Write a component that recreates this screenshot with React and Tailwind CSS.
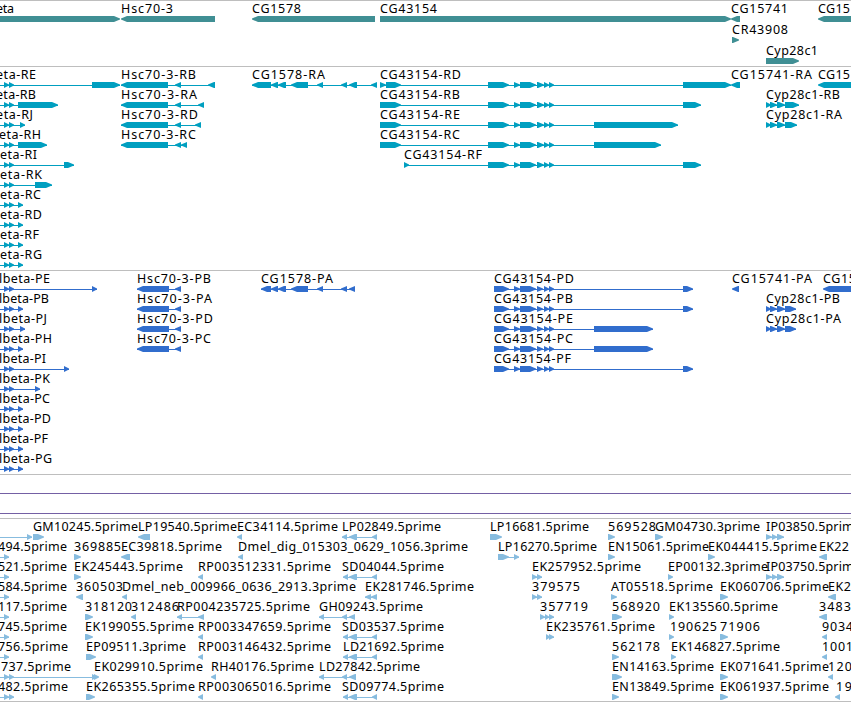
import React from 'react';

// Feature tuple: [label, labelStart, labelEnd, exons, strand]
const betaStart = [[-6, -1], [4, 9], [9, 14]];
const cgMid = [[488, 509], [514, 520], [520, 536], [537, 544], [544, 549], [549, 554]];
const cgMidCds = [[494, 509], [514, 520], [520, 536], [537, 543], [544, 549], [549, 554]];
const cypStart = [[766, 771], [770, 777], [777, 785]];
const sdExons = [[343, 348], [349, 357], [372, 377]];
const ipExons = [[766, 772], [772, 777], [777, 784]];
const estStart = [[-6, -1], [4, 9]];

const genes = [
  [
    ['eta', -4, 14, [[-10, 120]], 1],
    ['Hsc70-3', 121, 173, [[121, 215]], -1],
    ['CG1578', 252, 301, [[252, 375]], -1],
    ['CG43154', 380, 437, [[380, 731]], 1],
    ['CG15741', 731, 788, [[731, 740]], -1],
    ['CG15', 818, 850, [[818, 900]], -1],
  ],
  [['CR43908', 732, 788, [[732, 739]], 1]],
  [['Cyp28c1', 766, 818, [[766, 799]], 1]],
];

const transcripts = [
  [
    ['eta-RE', -4, 36, [...betaStart, [92, 120]], 1],
    ['Hsc70-3-RB', 121, 196, [[121, 168], [175, 181], [208, 215]], -1],
    ['CG1578-RA', 252, 325, [[252, 271], [271, 278], [278, 286], [291, 308], [317, 323], [341, 347], [349, 357], [371, 377]], -1],
    ['CG43154-RD', 380, 461, [[380, 386], [386, 401], ...cgMid, [683, 731]], 1],
    ['CG15741-RA', 731, 812, [[731, 740]], -1],
    ['CG15', 818, 850, [[818, 900]], -1],
  ],
  [
    ['eta-RB', -4, 36, [...betaStart, [18, 58]], 1],
    ['Hsc70-3-RA', 121, 197, [[121, 168], [175, 181], [198, 204]], -1],
    ['CG43154-RB', 380, 460, [[380, 401], ...cgMid, [683, 701]], 1],
    ['Cyp28c1-RB', 766, 840, [...cypStart, [785, 799]], 1],
  ],
  [
    ['eta-RJ', -4, 33, [...betaStart, [20, 25]], 1],
    ['Hsc70-3-RD', 121, 198, [[121, 168], [175, 181], [195, 201]], -1],
    ['CG43154-RE', 380, 460, [[380, 401], ...cgMid, [594, 678]], 1],
    ['Cyp28c1-RA', 766, 842, [...cypStart, [785, 797]], 1],
  ],
  [
    ['eta-RH', -1, 41, [...betaStart, [18, 47]], 1],
    ['Hsc70-3-RC', 121, 196, [[121, 168], [175, 181], [181, 187]], -1],
    ['CG43154-RC', 380, 460, [[380, 401], ...cgMid, [594, 661]], 1],
  ],
  [
    ['eta-RI', 0, 37, [...betaStart, [64, 74]], 1],
    ['CG43154-RF', 404, 482, [[404, 409], ...cgMid, [683, 701]], 1],
  ],
  [['eta-RK', 0, 42, [...betaStart, [35, 52]], 1]],
  [['eta-RC', 0, 41, [...betaStart, [18, 23]], 1]],
  [['eta-RD', 0, 42, [...betaStart, [18, 23]], 1]],
  [['eta-RF', 0, 39, [...betaStart, [18, 23]], 1]],
  [['eta-RG', 0, 42, [...betaStart, [18, 23]], 1]],
];

const proteins = [
  [
    ['lbeta-PE', -1, 50, [...betaStart, [92, 97]], 1],
    ['Hsc70-3-PB', 137, 211, [[137, 169], [175, 181]], -1],
    ['CG1578-PA', 261, 333, [[261, 271], [271, 278], [278, 286], [291, 308], [317, 323], [341, 347], [349, 355]], -1],
    ['CG43154-PD', 494, 574, [...cgMidCds, [683, 693]], 1],
    ['CG15741-PA', 732, 812, [[732, 739]], -1],
    ['CG15', 823, 856, [[823, 900]], -1],
  ],
  [
    ['lbeta-PB', -1, 49, [...betaStart, [18, 23]], 1],
    ['Hsc70-3-PA', 137, 212, [[137, 169], [175, 181]], -1],
    ['CG43154-PB', 494, 573, [...cgMidCds, [683, 693]], 1],
    ['Cyp28c1-PB', 766, 840, [...cypStart, [785, 796]], 1],
  ],
  [
    ['lbeta-PJ', -1, 47, [...betaStart, [20, 25]], 1],
    ['Hsc70-3-PD', 137, 213, [[137, 169], [175, 181]], -1],
    ['CG43154-PE', 494, 573, [...cgMidCds, [594, 653]], 1],
    ['Cyp28c1-PA', 766, 841, [...cypStart, [785, 796]], 1],
  ],
  [
    ['lbeta-PH', -1, 52, [...betaStart, [18, 23]], 1],
    ['Hsc70-3-PC', 137, 211, [[137, 169], [175, 181]], -1],
    ['CG43154-PC', 494, 573, [...cgMidCds, [594, 653]], 1],
  ],
  [
    ['lbeta-PI', -1, 46, [...betaStart, [64, 69]], 1],
    ['CG43154-PF', 494, 571, [...cgMidCds, [683, 693]], 1],
  ],
  [['lbeta-PK', -1, 50, [...betaStart, [35, 40]], 1]],
  [['lbeta-PC', -1, 50, [...betaStart, [18, 23]], 1]],
  [['lbeta-PD', -1, 51, [...betaStart, [18, 23]], 1]],
  [['lbeta-PF', -1, 48, [...betaStart, [18, 23]], 1]],
  [['lbeta-PG', -1, 52, [...betaStart, [18, 23]], 1]],
];

const ests = [
  [
    ['', 0, 0, [[-6, -1], [27, 32]], 1],
    ['GM10245.5prime', 33, 138, [[33, 44]], 1],
    ['LP19540.5prime', 138, 237, [[138, 150]], -1],
    ['EC34114.5prime', 237, 338, [[237, 242]], -1],
    ['LP02849.5prime', 342, 441, [[342, 347], [349, 357], [372, 377]], -1],
    ['LP16681.5prime', 490, 589, [[490, 502]], 1],
    ['569528', 608, 656, [[608, 615]], 1],
    ['GM04730.3prime', 655, 760, [[655, 663]], 1],
    ['IP03850.5prime', 766, 861, ipExons, 1],
  ],
  [
    ['494.5prime', -2, 67, estStart, 1],
    ['369885', 74, 121, [[74, 81]], 1],
    ['EC39818.5prime', 121, 222, [[121, 130]], -1],
    ['Dmel_dig_015303_0629_1056.3prime', 238, 468, [[238, 243]], -1],
    ['LP16270.5prime', 498, 597, [[498, 509], [514, 519]], 1],
    ['EN15061.5prime', 608, 709, [[608, 615]], 1],
    ['EK044415.5prime', 708, 817, [[708, 715]], 1],
    ['EK22', 819, 849, [[819, 827]], -1],
  ],
  [
    ['521.5prime', -2, 67, estStart, 1],
    ['EK245443.5prime', 74, 183, [[74, 81]], 1],
    ['RP003512331.5prime', 198, 331, [[198, 203]], -1],
    ['SD04044.5prime', 342, 444, sdExons, -1],
    ['EK257952.5prime', 532, 641, [[532, 537], [537, 542]], 1],
    ['EP00132.3prime', 668, 768, [[668, 673]], 1],
    ['IP03750.5prime', 766, 861, ipExons, 1],
  ],
  [
    ['584.5prime', -2, 67, estStart, 1],
    ['360503', 76, 123, [[76, 83]], -1],
    ['Dmel_neb_009966_0636_2913.3prime', 122, 356, [[122, 127]], -1],
    ['EK281746.5prime', 365, 474, [[365, 371], [371, 377]], -1],
    ['379575', 532, 580, [[532, 537], [537, 542]], 1],
    ['AT05518.5prime', 611, 713, [[611, 617]], 1],
    ['EK060706.5prime', 720, 829, [[720, 728]], 1],
    ['EK2', 828, 851, [[828, 836]], -1],
  ],
  [
    ['117.5prime', -2, 67, estStart, 1],
    ['318120', 85, 132, [[85, 93]], 1],
    ['312486', 131, 179, [[131, 136]], -1],
    ['RP004235725.5prime', 177, 310, [[177, 182], [198, 204]], -1],
    ['GH09243.5prime', 319, 423, [[319, 324], [342, 347], [349, 355]], -1],
    ['357719', 540, 588, [[540, 545], [545, 549], [549, 554]], 1],
    ['568920', 612, 660, [[612, 622]], 1],
    ['EK135560.5prime', 669, 778, [[669, 674]], 1],
    ['3483', 819, 851, [[819, 827]], -1],
  ],
  [
    ['745.5prime', -2, 67, estStart, 1],
    ['EK199055.5prime', 85, 194, [[85, 93]], 1],
    ['RP003347659.5prime', 198, 331, [[198, 203]], -1],
    ['SD03537.5prime', 342, 444, sdExons, -1],
    ['EK235761.5prime', 546, 655, [[546, 550], [549, 554]], 1],
    ['190625', 670, 717, [[669, 674]], 1],
    ['71906', 720, 760, [[720, 728]], 1],
    ['9034', 822, 853, [[822, 827]], -1],
  ],
  [
    ['756.5prime', -2, 68, estStart, 1],
    ['EP09511.3prime', 86, 186, [[86, 96]], 1],
    ['RP003146432.5prime', 198, 331, [[198, 203]], -1],
    ['LD21692.5prime', 343, 444, sdExons, -1],
    ['562178', 612, 660, [[612, 619]], 1],
    ['EK146827.5prime', 671, 780, [[671, 676]], 1],
    ['1001', 822, 853, [[822, 827]], -1],
  ],
  [
    ['737.5prime', 1, 71, [...betaStart, [92, 97]], 1],
    ['EK029910.5prime', 94, 203, [[94, 99]], 1],
    ['RH40176.5prime', 211, 314, [[211, 216]], -1],
    ['LD27842.5prime', 319, 420, [[319, 324], [342, 347], [349, 356]], -1],
    ['EN14163.5prime', 612, 714, [[612, 622]], 1],
    ['EK071641.5prime', 720, 829, [[720, 728]], 1],
    ['120', 828, 852, [[828, 833]], -1],
  ],
  [
    ['482.5prime', -2, 68, betaStart, 1],
    ['EK265355.5prime', 86, 195, [[86, 95]], 1],
    ['RP003065016.5prime', 198, 331, [[198, 203]], -1],
    ['SD09774.5prime', 342, 444, sdExons, -1],
    ['EN13849.5prime', 612, 714, [[612, 619]], 1],
    ['EK061937.5prime', 720, 829, [[720, 728]], 1],
    ['19', 836, 852, [[835, 840]], -1],
  ],
];

// Box with a pointed end in the direction of the strand
const exonPoints = (start, end, strand) => {
  const head = Math.min(6, end - start);
  if (strand > 0) {
    return `${start},15 ${end - head},15 ${end},17.5 ${end},18.5 ${end - head},21 ${start},21`;
  }
  return `${end},15 ${start + head},15 ${start},17.5 ${start},18.5 ${start + head},21 ${end},21`;
};

const Feature = ({ feature }) => {
  const [label, x, labelEnd, exons, strand] = feature;
  const first = exons[0][0];
  const last = exons[exons.length - 1][1];

  return (
    <g>
      {exons.length > 1 && <rect x={first} y="18" width={last - first} height="1" />}
      {exons.map(([start, end]) => (
        <polygon key={start} points={exonPoints(start, end, strand)} />
      ))}
      {label && (
        <text x={x} y="12" textLength={labelEnd - x} className="fill-black">
          {label}
        </text>
      )}
    </g>
  );
};

const Track = ({ rows, color, height, rowHeight }) => (
  <section className={`border-t border-[#bebebe] overflow-hidden ${height} ${color}`}>
    {rows.map((row, i) => (
      <svg key={i} className={`block w-full overflow-visible fill-current ${rowHeight}`}>
        {row.map((feature) => (
          <Feature key={feature[0]} feature={feature} />
        ))}
      </svg>
    ))}
  </section>
);

export default function App() {
  return (
    <main className="w-[851px] h-[702px] overflow-hidden bg-white font-['Noto_Sans',sans-serif] text-[12.5px]">
      <Track rows={genes} color="text-[#408f94]" height="h-[66px]" rowHeight="h-[21px]" />
      <Track rows={transcripts} color="text-[#009fc0]" height="h-[204px]" rowHeight="h-5" />
      <Track rows={proteins} color="text-[#316dcd]" height="h-[204px]" rowHeight="h-5" />
      <section className="h-11 border-t border-[#bebebe] pt-[18px]">
        <div className="h-[21px] border-y border-[#7460a4]" />
      </section>
      <Track rows={ests} color="text-[#87bcdf]" height="h-[183px]" rowHeight="h-5" />
      <div className="border-t border-[#bebebe]" />
    </main>
  );
}
